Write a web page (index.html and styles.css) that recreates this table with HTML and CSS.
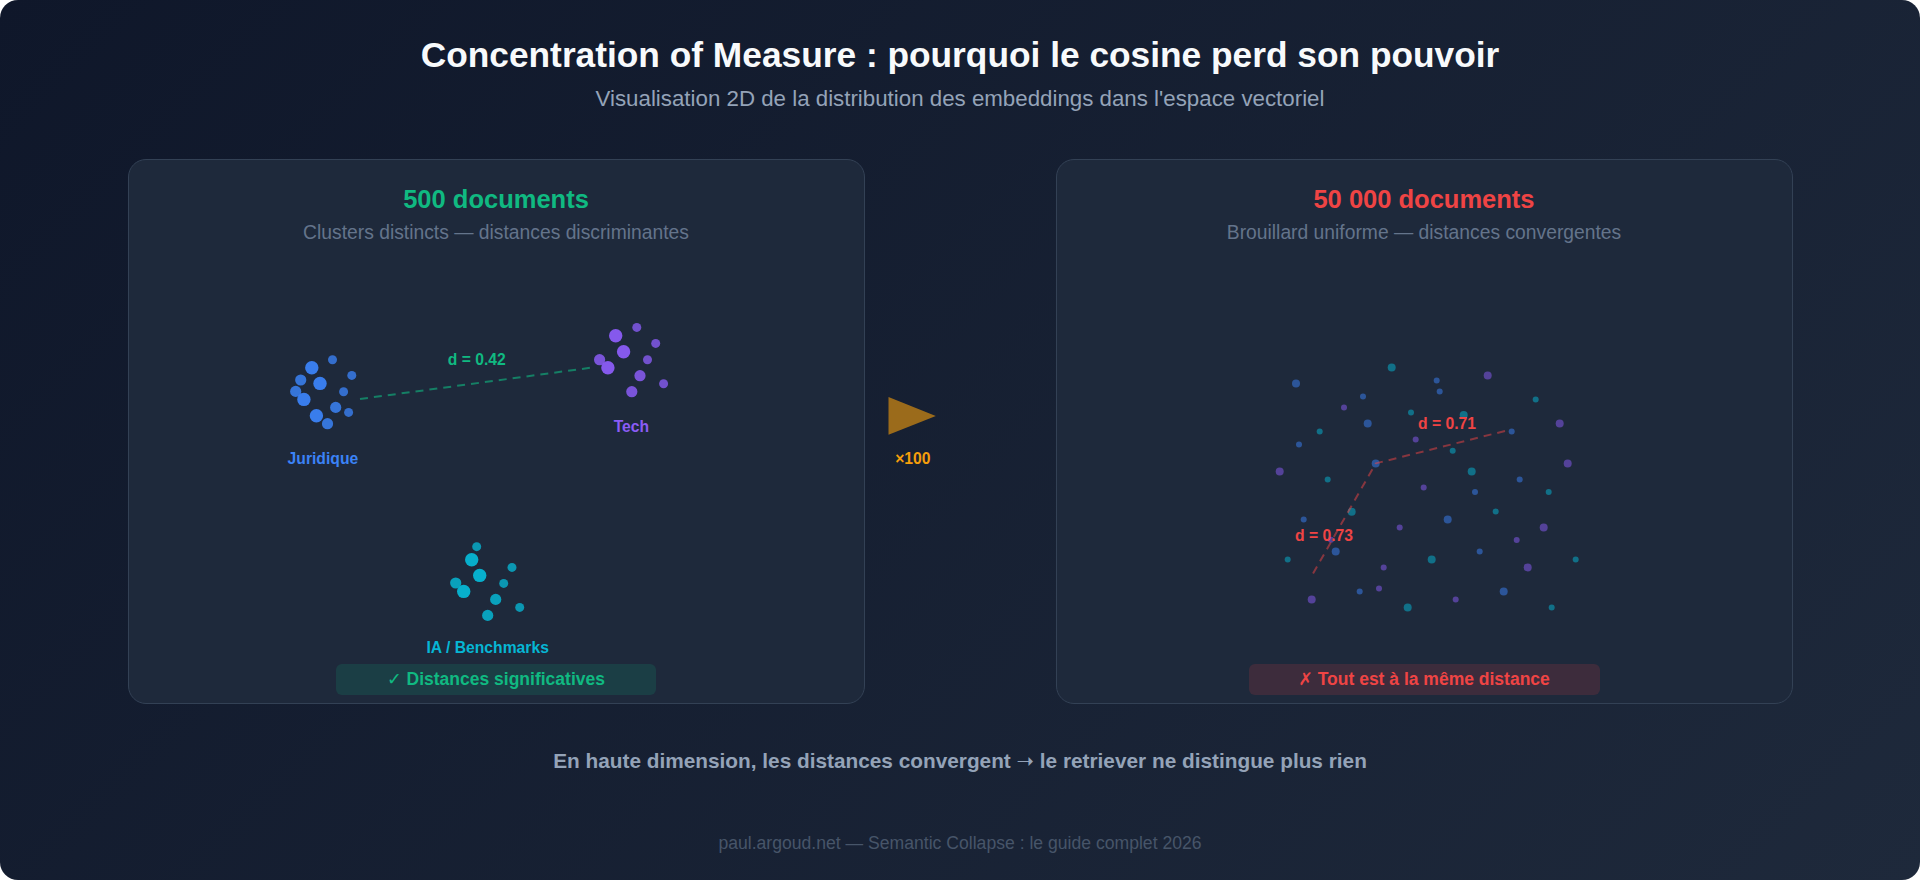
FILE: index.html
```html
<!DOCTYPE html>
<html lang="fr">
<head>
<meta charset="utf-8">
<title>Concentration of Measure</title>
<link rel="stylesheet" href="styles.css">
</head>
<body>
<div class="frame">
  <header class="head">
    <h1 class="title">Concentration of Measure : pourquoi le cosine perd son pouvoir</h1>
    <p class="subtitle">Visualisation 2D de la distribution des embeddings dans l'espace vectoriel</p>
  </header>

  <div class="stage">
    <section class="panel">
      <h2 class="panel-title green">500 documents</h2>
      <p class="panel-sub">Clusters distincts — distances discriminantes</p>
      <svg class="plot" viewBox="129 245.3 734 419.7" xmlns="http://www.w3.org/2000/svg">
        <line class="link-ok" x1="360" y1="399.3" x2="593.2" y2="367.7"/>
        <g class="blue">
          <circle class="lg" cx="311.8" cy="368" r="6.7"/>
          <circle class="sm" cx="332.5" cy="360" r="4.5"/>
          <circle class="md" cx="300.7" cy="380.3" r="5.6"/>
          <circle class="sm" cx="351.8" cy="375.7" r="4.5"/>
          <circle class="lg" cx="320" cy="383.7" r="6.7"/>
          <circle class="md" cx="295.7" cy="391.7" r="5.6"/>
          <circle class="sm" cx="343.6" cy="392" r="4.5"/>
          <circle class="lg" cx="303.9" cy="399.7" r="6.7"/>
          <circle class="md" cx="335.7" cy="407.7" r="5.6"/>
          <circle class="sm" cx="348.6" cy="412.7" r="4.5"/>
          <circle class="lg" cx="316.4" cy="416" r="6.7"/>
          <circle class="md" cx="327.5" cy="424" r="5.6"/>
        </g>
        <g class="purple">
          <circle class="sm" cx="636.8" cy="327.7" r="4.5"/>
          <circle class="lg" cx="615.7" cy="336" r="6.7"/>
          <circle class="sm" cx="655.7" cy="343.7" r="4.5"/>
          <circle class="lg" cx="623.6" cy="352" r="6.7"/>
          <circle class="sm" cx="647.5" cy="360" r="4.5"/>
          <circle class="md" cx="599.6" cy="360" r="5.6"/>
          <circle class="lg" cx="607.9" cy="368" r="6.7"/>
          <circle class="md" cx="640" cy="376" r="5.6"/>
          <circle class="sm" cx="663.6" cy="384" r="4.5"/>
          <circle class="md" cx="631.8" cy="392" r="5.6"/>
        </g>
        <g class="teal">
          <circle class="sm" cx="476.7" cy="547" r="4.5"/>
          <circle class="lg" cx="471.7" cy="560" r="6.7"/>
          <circle class="sm" cx="512" cy="567.7" r="4.5"/>
          <circle class="lg" cx="479.7" cy="575.7" r="6.7"/>
          <circle class="md" cx="455.7" cy="583.3" r="5.6"/>
          <circle class="sm" cx="503.7" cy="583.7" r="4.5"/>
          <circle class="lg" cx="463.7" cy="591.7" r="6.7"/>
          <circle class="md" cx="495.7" cy="599.7" r="5.6"/>
          <circle class="sm" cx="519.7" cy="607.7" r="4.5"/>
          <circle class="md" cx="487.7" cy="615.7" r="5.6"/>
        </g>
        <text class="lbl t-green" x="476.8" y="360">d = 0.42</text>
        <text class="lbl t-blue" x="322.9" y="458.7">Juridique</text>
        <text class="lbl t-purple" x="631.4" y="426.7">Tech</text>
        <text class="lbl t-teal" x="487.7" y="647.7">IA / Benchmarks</text>
      </svg>
      <div class="badge badge-ok">✓ Distances significatives</div>
    </section>

    <svg class="bridge" viewBox="864.5 159 191 545" xmlns="http://www.w3.org/2000/svg">
      <polygon class="arrow" points="888,397 888,434.7 935.3,416"/>
      <text class="lbl t-amber" x="912.3" y="458.7">×100</text>
    </svg>

    <section class="panel">
      <h2 class="panel-title red">50 000 documents</h2>
      <p class="panel-sub">Brouillard uniforme — distances convergentes</p>
      <svg class="plot" viewBox="1057 245.3 734 419.7" xmlns="http://www.w3.org/2000/svg">
        <g class="fog">
          <g class="teal">
            <circle cx="1391.7" cy="367.7" r="4"/>
            <circle cx="1463.7" cy="415.3" r="4"/>
            <circle cx="1471.7" cy="471.7" r="4"/>
            <circle cx="1351.7" cy="512" r="4"/>
            <circle cx="1431.7" cy="559.7" r="4"/>
            <circle cx="1407.7" cy="607.7" r="4"/>
            <circle cx="1535.7" cy="399.7" r="3"/>
            <circle cx="1411" cy="412.7" r="3"/>
            <circle cx="1319.7" cy="431.7" r="3"/>
            <circle cx="1452.7" cy="451" r="3"/>
            <circle cx="1327.7" cy="479.7" r="3"/>
            <circle cx="1548.7" cy="492.3" r="3"/>
            <circle cx="1495.7" cy="511.7" r="3"/>
            <circle cx="1287.7" cy="559.7" r="3"/>
            <circle cx="1575.7" cy="559.7" r="3"/>
            <circle cx="1551.7" cy="607.7" r="3"/>
          </g>
          <g class="blue">
            <circle cx="1296" cy="383.7" r="4"/>
            <circle cx="1367.7" cy="423.7" r="4"/>
            <circle cx="1375.7" cy="463.7" r="4"/>
            <circle cx="1447.7" cy="519.7" r="4"/>
            <circle cx="1335.7" cy="551.7" r="4"/>
            <circle cx="1503.7" cy="591.7" r="4"/>
            <circle cx="1436.7" cy="380.7" r="3"/>
            <circle cx="1439.7" cy="391.7" r="3"/>
            <circle cx="1363" cy="396.7" r="3"/>
            <circle cx="1511.7" cy="431.7" r="3"/>
            <circle cx="1299" cy="444.7" r="3"/>
            <circle cx="1519.7" cy="479.7" r="3"/>
            <circle cx="1475" cy="492.3" r="3"/>
            <circle cx="1303.7" cy="519.7" r="3"/>
            <circle cx="1479.7" cy="551.7" r="3"/>
            <circle cx="1359.7" cy="591.7" r="3"/>
          </g>
          <g class="purple">
            <circle cx="1487.7" cy="375.7" r="4"/>
            <circle cx="1559.7" cy="423.7" r="4"/>
            <circle cx="1567.7" cy="463.7" r="4"/>
            <circle cx="1279.7" cy="471.7" r="4"/>
            <circle cx="1543.7" cy="527.7" r="4"/>
            <circle cx="1527.7" cy="567.7" r="4"/>
            <circle cx="1311.7" cy="599.7" r="4"/>
            <circle cx="1344" cy="407.7" r="3"/>
            <circle cx="1415.7" cy="439.7" r="3"/>
            <circle cx="1423.7" cy="487.7" r="3"/>
            <circle cx="1399.7" cy="527.7" r="3"/>
            <circle cx="1516.7" cy="540.3" r="3"/>
            <circle cx="1383.7" cy="567.7" r="3"/>
            <circle cx="1379" cy="588.7" r="3"/>
            <circle cx="1455.7" cy="599.7" r="3"/>
            <circle cx="1331" cy="540" r="3"/>
          </g>
        </g>
        <path class="link-bad" d="M1505 431.3 L1375.7 463.7 L1312 575.7"/>
        <text class="lbl t-red" x="1447" y="423.5">d = 0.71</text>
        <text class="lbl t-red" x="1324" y="535.8">d = 0.73</text>
      </svg>
      <div class="badge badge-bad">✗ Tout est à la même distance</div>
    </section>
  </div>

  <p class="takeaway">En haute dimension, les distances convergent ➝ le retriever ne distingue plus rien</p>
  <p class="credit">paul.argoud.net — Semantic Collapse : le guide complet 2026</p>
</div>
</body>
</html>
```

FILE: styles.css
```css
html, body {
  margin: 0;
  padding: 0;
  background: #ffffff;
}

.frame {
  width: 1920px;
  height: 880px;
  box-sizing: border-box;
  border-radius: 18px;
  overflow: hidden;
  background: linear-gradient(135deg, #0f172a 0%, #1e293b 100%);
  display: flex;
  flex-direction: column;
  align-items: center;
  padding-top: 34.4px;
  font-family: "Liberation Sans", Arial, "DejaVu Sans", sans-serif;
}

.head {
  display: flex;
  flex-direction: column;
  align-items: center;
}

.title {
  margin: 0;
  font-size: 35.3px;
  line-height: 42px;
  font-weight: 700;
  color: #f8fafc;
}

.subtitle {
  margin: 8.9px 0 0;
  font-size: 22.3px;
  line-height: 28px;
  color: #94a3b8;
}

.stage {
  margin-top: 45.7px;
  display: flex;
  height: 545px;
}

.panel {
  width: 737px;
  height: 545px;
  box-sizing: border-box;
  border: 1.5px solid #334155;
  border-radius: 18px;
  background: #1e293b;
  display: flex;
  flex-direction: column;
  align-items: center;
  padding-top: 23.8px;
}

.panel-title {
  margin: 0;
  font-size: 25.5px;
  line-height: 30px;
  font-weight: 700;
}

.panel-title.green { color: #10b981; }
.panel-title.red { color: #ef4444; }

.panel-sub {
  margin: 7px 0 0;
  font-size: 19.3px;
  line-height: 24px;
  color: #64748b;
}

.plot {
  display: block;
  width: 734px;
  height: 419.7px;
}

.bridge {
  display: block;
  width: 191px;
  height: 545px;
}

.badge {
  height: 31px;
  display: flex;
  align-items: center;
  justify-content: center;
  border-radius: 6px;
  font-size: 17.5px;
  font-weight: 700;
}

.badge-ok {
  width: 320px;
  background: rgba(16, 185, 129, 0.15);
  color: #10b981;
}

.badge-bad {
  width: 351px;
  background: rgba(239, 68, 68, 0.15);
  color: #ef4444;
}

.takeaway {
  margin: 44px 0 0;
  font-size: 20.8px;
  line-height: 26px;
  font-weight: 700;
  color: #94a3b8;
}

.credit {
  margin: 58px 0 0;
  font-size: 17.6px;
  line-height: 22px;
  color: #475569;
}

/* scatter plots */
.blue { fill: #3b82f6; }
.purple { fill: #8b5cf6; }
.teal { fill: #06b6d4; }

.lg { opacity: 0.95; }
.md { opacity: 0.85; }
.sm { opacity: 0.78; }

.fog { opacity: 0.5; }

.link-ok {
  stroke: #10b981;
  stroke-width: 2;
  stroke-dasharray: 8 6;
  opacity: 0.6;
}

.link-bad {
  fill: none;
  stroke: #ef4444;
  stroke-width: 2;
  stroke-dasharray: 8 6;
  stroke-linejoin: round;
  opacity: 0.5;
}

.arrow {
  fill: #f59e0b;
  opacity: 0.6;
}

.lbl {
  font-family: "Liberation Sans", Arial, sans-serif;
  font-weight: 700;
  font-size: 15.7px;
  text-anchor: middle;
  dominant-baseline: central;
}

.t-green { fill: #10b981; }
.t-blue { fill: #3b82f6; }
.t-purple { fill: #8b5cf6; }
.t-teal { fill: #06b6d4; }
.t-red { fill: #ef4444; }
.t-amber { fill: #f59e0b; }
```
